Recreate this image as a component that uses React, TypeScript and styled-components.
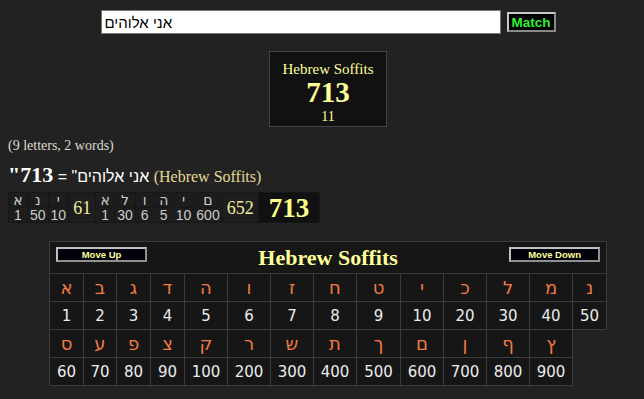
import React from 'react';
import styled, { createGlobalStyle } from 'styled-components';

const GlobalStyle = createGlobalStyle`
  html, body { margin: 0; padding: 0; background: #222222; }
  body { padding: 8px; font-family: "Liberation Serif", "Times New Roman", serif; color: #dddddd; }
`;

const Centered = styled.div<{ $top?: number }>`
  display: flex;
  justify-content: center;
  align-items: center;
  padding-left: 12px;
  margin-top: ${(p) => p.$top ?? 0}px;
`;

const SearchInput = styled.input`
  box-sizing: border-box;
  width: 400px;
  height: 24px;
  margin: 0 6px 0 0;
  padding: 0 3px;
  border: 1px solid #767676;
  background: #ffffff;
  color: #000000;
  font: 15px "Liberation Sans", Arial, sans-serif;
  outline: none;
`;

const MatchButton = styled.button`
  box-sizing: border-box;
  width: 49px;
  height: 20px;
  padding: 0;
  background: #000000;
  color: #33ee33;
  border: 2px solid #a8a8a8;
  border-color: #c8c8c8 #8a8a8a #8a8a8a #c8c8c8;
  font: bold 13.5px "Liberation Sans", Arial, sans-serif;
`;

const ResultBox = styled.div`
  box-sizing: border-box;
  width: 118px;
  height: 76px;
  padding-top: 8px;
  background: #111111;
  border: 1px solid #444444;
  display: flex;
  flex-direction: column;
  align-items: center;
  color: #ffff99;
`;

const BoxLine = styled.div<{ $size: number; $lh: number; $bold?: boolean; $mt?: number }>`
  font-size: ${(p) => p.$size}px;
  line-height: ${(p) => p.$lh}px;
  font-weight: ${(p) => (p.$bold ? 'bold' : 'normal')};
  margin-top: ${(p) => p.$mt ?? 0}px;
`;

const Counts = styled.div`
  margin-top: 11px;
  font-size: 14px;
  line-height: 16px;
  color: #ddddc8;
`;

const Equation = styled.div`
  margin-top: 9px;
  height: 24px;
  line-height: 24px;
  font: 16px "Liberation Sans", Arial, sans-serif;
  color: #ffffff;
  white-space: nowrap;
`;

const EqQuote = styled.span`
  font: bold 22px/24px "Liberation Serif", serif;
`;

const EqTotal = styled.b`
  font: bold 22px/24px "Liberation Serif", serif;
`;

const EqSystem = styled.span`
  font: 16px/24px "Liberation Serif", serif;
  color: #e2d892;
`;

const Breakdown = styled.table`
  margin-top: 5px;
  border-collapse: separate;
  border-spacing: 1px;
  background: #171717;
  font-family: "Liberation Sans", Arial, sans-serif;
  color: #cccccc;
`;

const BCell = styled.td<{ $letter?: boolean }>`
  min-width: 14px;
  height: 14px;
  padding: 0 2px;
  line-height: 14px;
  text-align: center;
  background: #1d1d1d;
  font-family: ${(p) => (p.$letter ? '"DejaVu Sans", sans-serif' : '"Liberation Sans", Arial, sans-serif')};
  font-size: ${(p) => (p.$letter ? '14px' : '14px')};
`;

const SumCell = styled.td`
  padding: 0 4px;
  text-align: center;
  background: #1d1d1d;
  font: 18px/20px "Liberation Serif", serif;
  color: #eeee99;
`;

const TotalCell = styled.td`
  padding: 0 10px;
  text-align: center;
  background: #111111;
  font: bold 27px/26px "Liberation Serif", serif;
  color: #ffff88;
`;

const Chart = styled.table`
  margin: 18px 0 0 41px;
  width: 557px;
  table-layout: fixed;
  border-collapse: collapse;
`;

const HeaderCell = styled.td`
  height: 31px;
  padding: 0 6px;
  border: 1px solid #3c3c3c;
  background: #161616;
  vertical-align: top;
`;

const HeaderBar = styled.div`
  display: grid;
  grid-template-columns: 91px 1fr 91px;
  height: 31px;
`;

const MoveButton = styled.button`
  box-sizing: border-box;
  width: 91px;
  height: 15px;
  margin-top: 5px;
  padding: 0;
  background: #00000a;
  border: 2px solid #a8a8a8;
  border-color: #c0c0c0 #909090 #909090 #c0c0c0;
  color: #ffff99;
  font: bold 9.5px "Liberation Sans", Arial, sans-serif;
  line-height: 11px;
`;

const Title = styled.div`
  align-self: center;
  text-align: center;
  font: bold 22px/24px "Liberation Serif", serif;
  color: #ffff99;
  padding-top: 1px;
`;

const ChartCell = styled.td<{ $letter?: boolean }>`
  height: 27px;
  padding: 0;
  border: 1px solid #3c3c3c;
  background: #161616;
  text-align: center;
  line-height: 20px;
  font-family: "DejaVu Sans", Verdana, sans-serif;
  font-size: ${(p) => (p.$letter ? '18px' : '15px')};
  color: ${(p) => (p.$letter ? '#f27a40' : '#ececec')};
`;

const colWidths = [34, 33, 34, 34, 43, 43, 43, 43, 44, 43, 43, 43, 43, 34];

const row1 = [
  ['א', 1], ['ב', 2], ['ג', 3], ['ד', 4], ['ה', 5], ['ו', 6], ['ז', 7],
  ['ח', 8], ['ט', 9], ['י', 10], ['כ', 20], ['ל', 30], ['מ', 40], ['נ', 50],
] as const;

const row2 = [
  ['ס', 60], ['ע', 70], ['פ', 80], ['צ', 90], ['ק', 100], ['ר', 200], ['ש', 300],
  ['ת', 400], ['ך', 500], ['ם', 600], ['ן', 700], ['ף', 800], ['ץ', 900],
] as const;

const words = [
  { letters: [['א', 1], ['נ', 50], ['י', 10]] as [string, number][], sum: 61 },
  { letters: [['א', 1], ['ל', 30], ['ו', 6], ['ה', 5], ['י', 10], ['ם', 600]] as [string, number][], sum: 652 },
];

export default function App() {
  return (
    <>
      <GlobalStyle />
      <Centered $top={2}>
        <SearchInput defaultValue="אני אלוהים" />
        <MatchButton>Match</MatchButton>
      </Centered>
      <Centered $top={17}>
        <ResultBox>
          <BoxLine $size={15} $lh={18}>Hebrew Soffits</BoxLine>
          <BoxLine $size={29} $lh={28} $bold>713</BoxLine>
          <BoxLine $size={14} $lh={18} $mt={2}>11</BoxLine>
        </ResultBox>
      </Centered>
      <Counts>(9 letters, 2 words)</Counts>
      <Equation>
        <EqQuote>"</EqQuote>אני אלוהים" = <EqTotal>713</EqTotal> <EqSystem>(Hebrew Soffits)</EqSystem>
      </Equation>
      <Breakdown>
        <tbody>
          <tr>
            {words[0].letters.map(([l], i) => <BCell key={'a' + i} $letter>{l}</BCell>)}
            <SumCell rowSpan={2}>{words[0].sum}</SumCell>
            {words[1].letters.map(([l], i) => <BCell key={'b' + i} $letter>{l}</BCell>)}
            <SumCell rowSpan={2}>{words[1].sum}</SumCell>
            <TotalCell rowSpan={2}>713</TotalCell>
          </tr>
          <tr>
            {words[0].letters.map(([, v], i) => <BCell key={'c' + i}>{v}</BCell>)}
            {words[1].letters.map(([, v], i) => <BCell key={'d' + i}>{v}</BCell>)}
          </tr>
        </tbody>
      </Breakdown>
      <Chart>
        <colgroup>
          {colWidths.map((w, i) => <col key={i} style={{ width: w }} />)}
        </colgroup>
        <tbody>
          <tr>
            <HeaderCell colSpan={14}>
              <HeaderBar>
                <MoveButton>Move Up</MoveButton>
                <Title>Hebrew Soffits</Title>
                <MoveButton>Move Down</MoveButton>
              </HeaderBar>
            </HeaderCell>
          </tr>
          <tr>{row1.map(([l], i) => <ChartCell key={i} $letter>{l}</ChartCell>)}</tr>
          <tr>{row1.map(([, v], i) => <ChartCell key={i}>{v}</ChartCell>)}</tr>
          <tr>{row2.map(([l], i) => <ChartCell key={i} $letter>{l}</ChartCell>)}</tr>
          <tr>{row2.map(([, v], i) => <ChartCell key={i}>{v}</ChartCell>)}</tr>
        </tbody>
      </Chart>
    </>
  );
}
